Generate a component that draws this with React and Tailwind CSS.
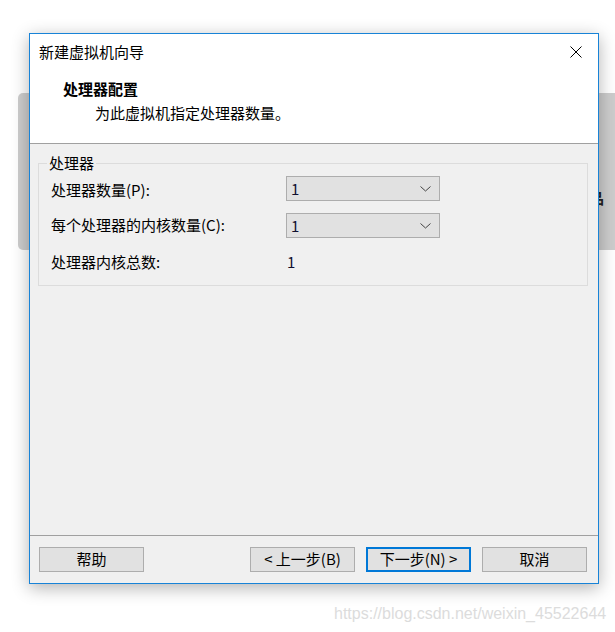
import React from "react";

const cjk = "font-['Microsoft_YaHei_UI','Noto_Sans_CJK_SC',sans-serif]";

function Chevron() {
  return (
    <svg width="11" height="6" viewBox="0 0 11 6" className="shrink-0">
      <path d="M0.5 0.5 L5.5 5 L10.5 0.5" fill="none" stroke="#444" strokeWidth="1" />
    </svg>
  );
}

function SelectBox({ value }) {
  return (
    <div className="flex h-[25px] w-[154px] items-center justify-between border border-[#adadad] bg-[#e1e1e1] pl-[4px] pr-[8px]">
      <span className="text-[15px] leading-none text-[#101030]">{value}</span>
      <Chevron />
    </div>
  );
}

function Button({ children, primary = false }) {
  return (
    <button
      className={
        "flex h-[25px] w-[105px] items-center justify-center whitespace-pre bg-[#e1e1e1] text-[15px] text-black " +
        (primary ? "border-2 border-[#0078d7]" : "border border-[#adadad]")
      }
    >
      {children}
    </button>
  );
}

export default function App() {
  return (
    <div className={`relative h-[632px] w-[615px] overflow-hidden bg-white ${cjk}`}>
      {/* window behind the dialog */}
      <div className="absolute left-[18px] top-[93px] h-[157px] w-[620px] rounded-l-[5px] bg-[#cdcdcd]">
        <span className="absolute left-[571px] top-[94px] text-[15px] font-bold text-[#222]">品</span>
      </div>

      {/* dialog */}
      <div className="absolute left-[29px] top-[33px] flex h-[551px] w-[570px] flex-col border border-[#1883d7] bg-[#f0f0f0] shadow-[0_4px_16px_rgba(0,0,0,0.3)]">
        <div className="bg-white">
          <div className="flex h-[36px] items-center justify-between pl-[9px] pr-[16px]">
            <span className="text-[15px] text-black">新建虚拟机向导</span>
            <svg width="12" height="12" viewBox="0 0 12 12">
              <path d="M0.5 0.5 L11.5 11.5 M11.5 0.5 L0.5 11.5" stroke="#000" strokeWidth="1" />
            </svg>
          </div>
          <div className="h-[73px] pl-[33px] pt-[9px]">
            <div className="text-[15px] font-bold leading-[20px] text-black">处理器配置</div>
            <div className="mt-[4px] pl-[32px] text-[15px] leading-[20px] text-black">
              为此虚拟机指定处理器数量。
            </div>
          </div>
        </div>
        <div className="h-px bg-[#a0a0a0]" />

        <div className="flex-1 px-[8px] pr-[10px] pt-[10px]">
          <fieldset className="border border-[#dcdcdc] px-[12px] pb-[10px]">
            <legend className="ml-[-4px] px-[2px] text-[15px] leading-[18px] text-black">处理器</legend>
            <div className="mt-[4px] flex flex-col gap-[12px] text-[15px] text-black">
              <div className="flex h-[25px] items-center">
                <span className="w-[235px] pt-[3px]">处理器数量(P):</span>
                <SelectBox value="1" />
              </div>
              <div className="flex h-[25px] items-center">
                <span className="w-[235px]">每个处理器的内核数量(C):</span>
                <SelectBox value="1" />
              </div>
              <div className="flex h-[25px] items-center">
                <span className="w-[236px]">处理器内核总数:</span>
                <span className="text-[#101030]">1</span>
              </div>
            </div>
          </fieldset>
        </div>

        <div className="h-px bg-[#a0a0a0]" />
        <div className="flex h-[47px] items-center justify-between pl-[9px] pr-[11px]">
          <Button>帮助</Button>
          <div className="flex gap-[11px]">
            <Button>{"< 上一步(B)"}</Button>
            <Button primary>{"下一步(N) >"}</Button>
            <Button>取消</Button>
          </div>
        </div>
      </div>

      <div className="absolute left-[334px] top-[602px] font-['Liberation_Sans',Arial,sans-serif] text-[16px] text-[#dcdcdc]">
        https://blog.csdn.net/weixin_45522644
      </div>
    </div>
  );
}
